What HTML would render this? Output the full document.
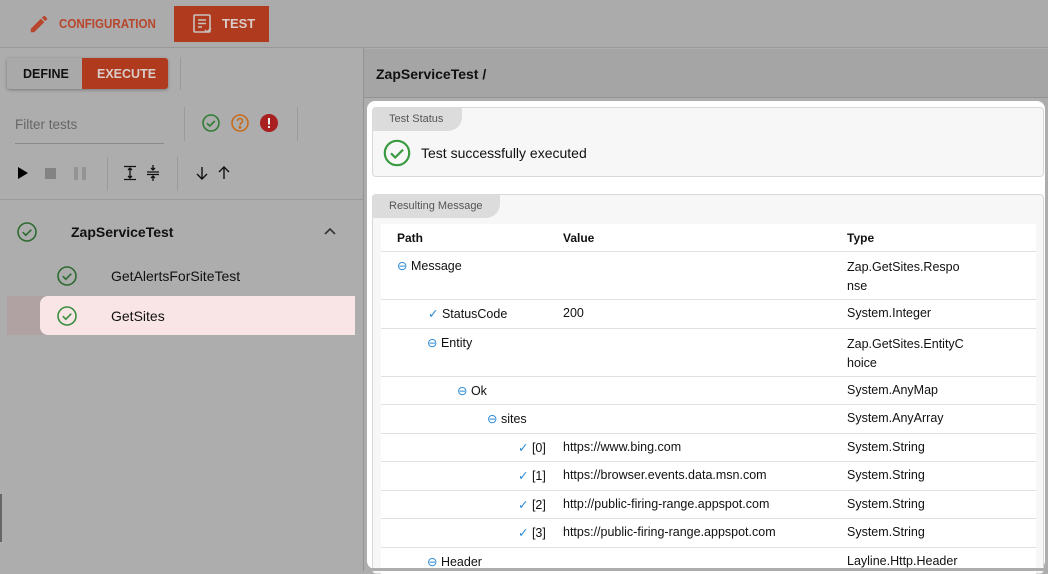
<!DOCTYPE html>
<html><head><meta charset="utf-8"><style>
*{margin:0;padding:0;box-sizing:border-box}
body{width:1048px;height:571px;overflow:hidden;background:#adadad;font-family:"Liberation Sans",sans-serif;font-size:13px;color:#111;position:relative}
.a{position:absolute}
.t{position:absolute;white-space:nowrap}
.vd{position:absolute;width:1px;background:#9a9a9a}
</style></head><body>
<div class="a" style="left:0;top:0;width:1048px;height:48px;background:#ababab;border-bottom:1px solid #999"></div>
<svg class="a" style="left:28px;top:13px" width="22" height="22" viewBox="0 0 24 24"><path d="M3 17.25V21h3.75L17.81 9.94l-3.75-3.75L3 17.25zM20.71 7.04a1 1 0 000-1.41l-2.34-2.34a1 1 0 00-1.41 0l-1.83 1.83 3.75 3.75 1.83-1.83z" fill="#b8462c"/></svg>
<div class="t" style="left:59px;top:16px;font-size:13px;font-weight:bold;color:#b8462c;transform:scaleX(0.89);transform-origin:0 0">CONFIGURATION</div>
<div class="a" style="left:174px;top:6px;width:95px;height:36px;background:#b03a1e"></div>
<svg class="a" style="left:192px;top:13px" width="22" height="22" viewBox="0 0 22 22" fill="none" stroke="#c9c2c0" stroke-width="1.6"><rect x="2" y="2" width="16" height="17" rx="1"/><path d="M6 7h8M6 10.5h8M6 14h4"/><path d="M13 17l2 2 4-4" stroke-width="1.4"/></svg>
<div class="t" style="left:222px;top:16px;font-size:13px;font-weight:bold;color:#d8cdca">TEST</div>

<div class="a" style="left:363px;top:48px;width:1px;height:523px;background:#939393"></div>
<div class="a" style="left:7px;top:58px;width:161px;height:31px;border-radius:3px;background:#a9a9a9;box-shadow:0 1px 3px rgba(0,0,0,.3)"></div>
<div class="a" style="left:82px;top:58px;width:86px;height:31px;border-radius:0 3px 3px 0;background:#b03a1e"></div>
<div class="t" style="left:23px;top:67px;font-weight:bold;font-size:12.5px;color:#111">DEFINE</div>
<div class="t" style="left:97px;top:67px;font-size:12.5px;color:#d8cdca;font-weight:bold">EXECUTE</div>
<div class="vd" style="left:180px;top:57px;height:33px"></div>
<div class="t" style="left:15px;top:117px;font-size:13.5px;color:#666">Filter tests</div>
<div class="a" style="left:15px;top:143px;width:149px;height:1px;background:#8a8a8a"></div>
<div class="vd" style="left:184px;top:107px;height:34px"></div>
<svg class="a" style="left:202px;top:114px" width="18" height="18" viewBox="0 0 18 18" fill="none" stroke="#2e7d32" stroke-width="1.6"><circle cx="9" cy="9" r="8"/><path d="M5 9.2l2.8 2.8 5-5"/></svg>
<svg class="a" style="left:231px;top:114px" width="18" height="18" viewBox="0 0 18 18" fill="none" stroke="#c76a1a" stroke-width="1.6"><circle cx="9" cy="9" r="8"/><path d="M6.5 7a2.5 2.5 0 115 0c0 1.8-2.5 2-2.5 4"/><circle cx="9" cy="13.3" r=".6" fill="#c76a1a"/></svg>
<svg class="a" style="left:260px;top:114px" width="18" height="18" viewBox="0 0 18 18"><circle cx="9" cy="9" r="9" fill="#a82020"/><rect x="8" y="4" width="2" height="6.5" fill="#eee"/><rect x="8" y="12" width="2" height="2" fill="#eee"/></svg>
<div class="vd" style="left:297px;top:107px;height:34px"></div>
<svg class="a" style="left:16px;top:166px" width="14" height="14"><path d="M2 1v12l10-6z" fill="#000"/></svg>
<div class="a" style="left:45px;top:168px;width:11px;height:11px;background:#838383"></div>
<div class="a" style="left:74px;top:167px;width:4px;height:13px;background:#939393"></div>
<div class="a" style="left:82px;top:167px;width:4px;height:13px;background:#939393"></div>
<div class="vd" style="left:107px;top:157px;height:34px"></div>
<svg class="a" style="left:123px;top:165px" width="14" height="16" fill="none" stroke="#111" stroke-width="1.3"><path d="M1 1.5h12M1 14.5h12M7 3v10M5 5l2-2 2 2M5 11l2 2 2-2"/></svg>
<svg class="a" style="left:146px;top:165px" width="14" height="16" fill="none" stroke="#111" stroke-width="1.3"><path d="M1 7h12M1 9.5h12M7 0v5M5 3l2 2 2-2M7 16v-5M5 13l2-2 2 2"/></svg>
<div class="vd" style="left:177px;top:157px;height:34px"></div>
<svg class="a" style="left:195px;top:166px" width="14" height="14" fill="none" stroke="#111" stroke-width="1.4"><path d="M7 1v12M2 8l5 5 5-5"/></svg>
<svg class="a" style="left:217px;top:166px" width="14" height="14" fill="none" stroke="#111" stroke-width="1.4"><path d="M7 13V1M2 6l5-5 5 5"/></svg>
<div class="a" style="left:0;top:199px;width:363px;height:1px;background:#9a9a9a"></div>
<svg class="a" style="left:17px;top:222px" width="20" height="20" fill="none" stroke="#2e6b31" stroke-width="1.6"><circle cx="10" cy="10" r="9"/><path d="M5.8 10.2l3 3 5.5-5.5"/></svg>
<div class="t" style="left:71px;top:224px;font-weight:bold;font-size:14px">ZapServiceTest</div>
<svg class="a" style="left:323px;top:226px" width="14" height="10" fill="none" stroke="#333" stroke-width="1.6"><path d="M2 8l5-5 5 5"/></svg>
<svg class="a" style="left:57px;top:266px" width="20" height="20" fill="none" stroke="#2e6b31" stroke-width="1.6"><circle cx="10" cy="10" r="9"/><path d="M5.8 10.2l3 3 5.5-5.5"/></svg>
<div class="t" style="left:111px;top:268px;font-size:14px">GetAlertsForSiteTest</div>
<div class="a" style="left:7px;top:296px;width:50px;height:39px;background:#b0a2a2"></div>
<div class="a" style="left:40px;top:296px;width:315px;height:39px;background:#f9e5e5;border-radius:8px 0 0 8px"></div>
<svg class="a" style="left:57px;top:306px" width="20" height="20" fill="none" stroke="#3c8f41" stroke-width="1.6"><circle cx="10" cy="10" r="9"/><path d="M5.8 10.2l3 3 5.5-5.5"/></svg>
<div class="t" style="left:111px;top:308px;font-size:14px">GetSites</div>
<div class="a" style="left:0;top:494px;width:2px;height:48px;background:#666"></div>

<div class="a" style="left:364px;top:49px;width:684px;height:49px;background:#a5a5a5;border-bottom:1px solid #939393"></div>
<div class="t" style="left:376px;top:66px;font-weight:bold;font-size:14px">ZapServiceTest /</div>

<div class="a" style="left:367px;top:101px;width:678px;height:468px;background:#fff;border-radius:8px"></div>
<div class="a" style="left:372px;top:107px;width:672px;height:70px;background:#f7f7f7;border:1px solid #d8d8d8;border-radius:4px"></div>
<div class="a" style="left:372px;top:107px;width:90px;height:24px;background:#dcdcdc;border-radius:4px 0 14px 0"></div>
<div class="t" style="left:389px;top:113px;font-size:11px;color:#555">Test Status</div>
<svg class="a" style="left:383px;top:139px" width="28" height="28" fill="none" stroke="#3a9a40" stroke-width="2.2"><circle cx="14" cy="14" r="12.2"/><path d="M8 14.3l4.2 4.2 7.8-7.8"/></svg>
<div class="t" style="left:421px;top:145px;font-size:14px">Test successfully executed</div>

<div class="a" style="left:372px;top:194px;width:672px;height:380px;background:#f7f7f7;border:1px solid #d8d8d8;border-radius:4px"></div>
<div class="a" style="left:372px;top:194px;width:128px;height:24px;background:#dcdcdc;border-radius:4px 0 14px 0"></div>
<div class="t" style="left:389px;top:200px;font-size:11px;color:#555">Resulting Message</div>
<div class="a" style="left:381px;top:224px;width:655px;height:350px;background:#fff"></div>
<div class="t" style="left:397px;top:231px;font-size:12px;font-weight:bold">Path</div>
<div class="t" style="left:563px;top:231px;font-size:12px;font-weight:bold">Value</div>
<div class="t" style="left:847px;top:231px;font-size:12px;font-weight:bold">Type</div>
<div class="a" style="left:381px;top:251px;width:655px;height:1px;background:#e0e0e0"></div>

<div class="t" style="left:397px;top:258px;font-size:12.5px"><span style="color:#2a8ad8">⊖</span> Message</div>
<div class="t" style="left:847px;top:258px;font-size:12.5px;line-height:19px">Zap.GetSites.Respo<br>nse</div>
<div class="a" style="left:381px;top:299px;width:655px;height:1px;background:#e0e0e0"></div>
<div class="t" style="left:428px;top:306px;font-size:12.5px"><span style="color:#2a8ad8">✓</span> StatusCode</div>
<div class="t" style="left:563px;top:306px;font-size:12.5px">200</div>
<div class="t" style="left:847px;top:306px;font-size:12.5px">System.Integer</div>
<div class="a" style="left:381px;top:328px;width:655px;height:1px;background:#e0e0e0"></div>
<div class="t" style="left:427px;top:335px;font-size:12.5px"><span style="color:#2a8ad8">⊖</span> Entity</div>
<div class="t" style="left:847px;top:335px;font-size:12.5px;line-height:19px">Zap.GetSites.EntityC<br>hoice</div>
<div class="a" style="left:381px;top:376px;width:655px;height:1px;background:#e0e0e0"></div>
<div class="t" style="left:457px;top:383px;font-size:12.5px"><span style="color:#2a8ad8">⊖</span> Ok</div>
<div class="t" style="left:847px;top:383px;font-size:12.5px">System.AnyMap</div>
<div class="a" style="left:381px;top:404px;width:655px;height:1px;background:#e0e0e0"></div>
<div class="t" style="left:487px;top:411px;font-size:12.5px"><span style="color:#2a8ad8">⊖</span> sites</div>
<div class="t" style="left:847px;top:411px;font-size:12.5px">System.AnyArray</div>
<div class="a" style="left:381px;top:433px;width:655px;height:1px;background:#e0e0e0"></div>
<div class="t" style="left:518px;top:440px;font-size:12.5px"><span style="color:#2a8ad8">✓</span> [0]</div>
<div class="t" style="left:563px;top:440px;font-size:12.5px">https://www.bing.com</div>
<div class="t" style="left:847px;top:440px;font-size:12.5px">System.String</div>
<div class="a" style="left:381px;top:461px;width:655px;height:1px;background:#e0e0e0"></div>
<div class="t" style="left:518px;top:468px;font-size:12.5px"><span style="color:#2a8ad8">✓</span> [1]</div>
<div class="t" style="left:563px;top:468px;font-size:12.5px">https://browser.events.data.msn.com</div>
<div class="t" style="left:847px;top:468px;font-size:12.5px">System.String</div>
<div class="a" style="left:381px;top:490px;width:655px;height:1px;background:#e0e0e0"></div>
<div class="t" style="left:518px;top:497px;font-size:12.5px"><span style="color:#2a8ad8">✓</span> [2]</div>
<div class="t" style="left:563px;top:497px;font-size:12.5px">http://public-firing-range.appspot.com</div>
<div class="t" style="left:847px;top:497px;font-size:12.5px">System.String</div>
<div class="a" style="left:381px;top:518px;width:655px;height:1px;background:#e0e0e0"></div>
<div class="t" style="left:518px;top:525px;font-size:12.5px"><span style="color:#2a8ad8">✓</span> [3]</div>
<div class="t" style="left:563px;top:525px;font-size:12.5px">https://public-firing-range.appspot.com</div>
<div class="t" style="left:847px;top:525px;font-size:12.5px">System.String</div>
<div class="a" style="left:381px;top:547px;width:655px;height:1px;background:#e0e0e0"></div>
<div class="t" style="left:427px;top:554px;font-size:12.5px"><span style="color:#2a8ad8">⊖</span> Header</div>
<div class="t" style="left:847px;top:554px;font-size:12.5px">Layline.Http.Header</div>
<div class="a" style="left:364px;top:568px;width:684px;height:3px;background:#adadad"></div>
<div class="a" style="left:1045px;top:98px;width:3px;height:473px;background:#adadad"></div>
</body></html>
